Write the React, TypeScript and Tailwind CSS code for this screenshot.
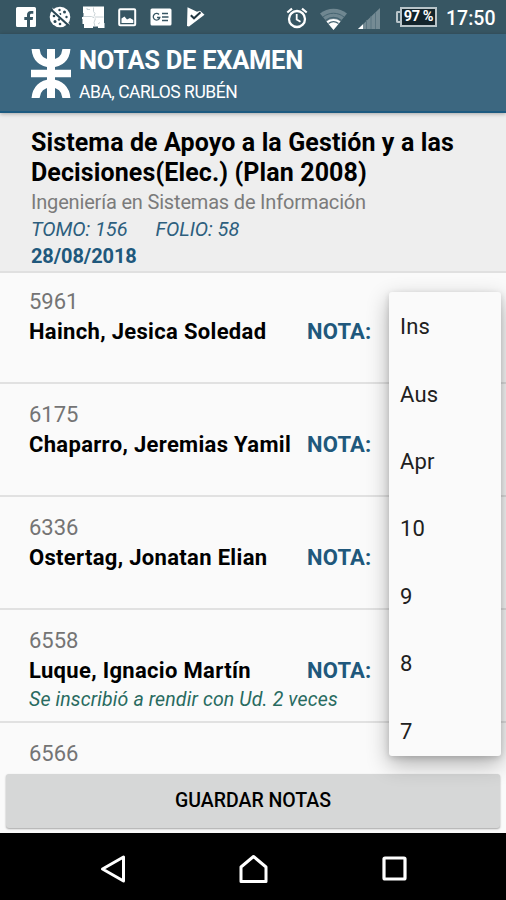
/**
 * App — Notas de examen
 *
 * - StatusBar: barra de estado del sistema
 * - AppBar: logo, título y docente
 * - ExamHeader: datos de la mesa
 * - StudentRow: alumno + nota
 * - GradeMenu: desplegable de notas
 */

interface Student {
  id: string;
  name: string;
  note?: string;
}

const STUDENTS: Student[] = [
  { id: '5961', name: 'Hainch, Jesica Soledad' },
  { id: '6175', name: 'Chaparro, Jeremias Yamil' },
  { id: '6336', name: 'Ostertag, Jonatan Elian' },
  { id: '6558', name: 'Luque, Ignacio Martín', note: 'Se inscribió a rendir con Ud. 2 veces' },
  { id: '6566', name: '' },
];

const GRADES = ['Ins', 'Aus', 'Apr', '10', '9', '8', '7'];

export default function App() {
  return (
    <div className="relative flex h-[900px] w-[506px] flex-col overflow-hidden bg-[#fafafa] font-['Roboto','Noto_Sans',sans-serif] text-black">
      <StatusBar />
      <AppBar />
      <ExamHeader />
      <main className="-mt-0.5 min-h-0 flex-1 overflow-hidden">
        {STUDENTS.map((student) => (
          <StudentRow key={student.id} student={student} />
        ))}
      </main>
      <div className="h-[60px] shrink-0 px-1.5 pt-px">
        <button
          type="button"
          className="flex h-[54px] w-full items-center justify-center rounded-[3px] bg-[#d6d7d7] text-[19.5px] font-medium shadow-[0_1px_2px_rgba(0,0,0,0.35)]"
        >
          GUARDAR NOTAS
        </button>
      </div>
      <NavBar />
      <GradeMenu />
    </div>
  );
}

function StatusBar() {
  return (
    <div className="flex h-[34px] shrink-0 items-center bg-[#375663] pl-4 text-white">
      {/* Facebook */}
      <svg width="20" height="20" viewBox="0 0 20 20">
        <path fill="currentColor" d="M1.500 0h17A1.500 1.500 0 0 1 20 1.500v17a1.500 1.500 0 0 1-1.500 1.500H14v-7h2.700l.4-3H14V8.300c0-1 .4-1.500 1.600-1.500h1.700V4c-.5-.1-1.300-.1-2.300-.1-2.500 0-4 1.500-4 4V10H8.300v3H11v7H1.500A1.500 1.500 0 0 1 0 18.500v-17A1.500 1.500 0 0 1 1.500 0z" />
      </svg>
      {/* Galleta tachada */}
      <svg className="ml-[13px]" width="22" height="22" viewBox="0 0 22 22">
        <circle cx="11" cy="11" r="10.300" fill="currentColor" />
        <g fill="#2b4855">
          <circle cx="10.500" cy="4" r="1.200" />
          <circle cx="15.500" cy="6" r="1.500" />
          <circle cx="5" cy="10" r="1.300" />
          <circle cx="17.500" cy="11" r="1.200" />
          <circle cx="11.300" cy="8" r="1" />
          <circle cx="6" cy="15.500" r="1.500" />
          <circle cx="11" cy="18" r="1.300" />
          <circle cx="10" cy="13.500" r="1.200" />
        </g>
        <path d="M2 3.500l17.500 16" stroke="#2b4855" strokeWidth="2.200" />
        <path d="M3.500 2.300l17 15.800" stroke="currentColor" strokeWidth="1" />
      </svg>
      {/* Rompecabezas */}
      <svg className="ml-[11px]" width="23" height="23" viewBox="0 0 23 23">
        <path fill="currentColor" d="M1 .5h21V17h.5v5H16v-1.500h-5V22H2v-4H.5v-5H0v-2h1.500V7H1z" />
        <path fill="none" stroke="#c3cdd1" strokeWidth=".9" d="M11.500 1.500v4l1.500 2-1 3M1.500 10.500h8l3 1.500M13.500 12.500l-1.500 4 1 4M13 11h8.500M5 2v1.500h3M16 18l2-1.500" />
      </svg>
      {/* Imagen */}
      <svg className="ml-[13px]" width="19" height="19" viewBox="0 0 19 19">
        <rect x="1.200" y="1.200" width="16" height="16" rx="1" fill="none" stroke="currentColor" strokeWidth="2" />
        <path fill="currentColor" d="M3.500 15v-4.500l3-2 2.500 3 3-1.500 3.300 2V15z" />
      </svg>
      {/* Noticias */}
      <svg className="ml-[13px]" width="22" height="18" viewBox="0 0 22 18">
        <rect x=".5" y=".5" width="21" height="17" rx="1.500" fill="currentColor" />
        <path fill="none" stroke="#375663" strokeWidth="1.300" d="M9 6.500A3.300 3.300 0 1 0 9.800 9.500H7M12 5.500h6M12 9h6.500M12 12.500h6" />
      </svg>
      {/* Play con tilde */}
      <svg className="ml-[14px]" width="19" height="20" viewBox="0 0 19 20">
        <path fill="currentColor" d="M1.500.3L11 4.800l3-1 4.500 4L3 19.500 1 19z" />
        <path d="M4.800 8.300l3.200 3 6.500-6" fill="none" stroke="#1f3540" strokeWidth="2" />
      </svg>

      {/* Alarma */}
      <svg className="ml-[81px] mt-px" width="22" height="22" viewBox="0 0 22 22" fill="none" stroke="currentColor">
        <circle cx="11" cy="12" r="8" strokeWidth="2.300" />
        <path strokeWidth="1.800" d="M10.700 7v5.500l3.800 2.300" />
        <path strokeWidth="2.200" d="M1.300 5.500L6 1.700M20.700 5.500L16 1.700" />
      </svg>
      {/* WiFi */}
      <svg className="ml-3 mt-1" width="27" height="22" viewBox="0 0 27 22">
        <path fill="#6f8791" d="M13.500 22L0 5.500C7.500-1 19.500-1 27 5.500z" />
        <path fill="none" stroke="#456471" strokeWidth="1" d="M3 9C9 4 18 4 24 9" />
        <path fill="currentColor" d="M13.500 22L6.500 13.500c4-3.300 10-3.300 14 0z" />
        <path fill="none" stroke="#456471" strokeWidth="1.300" d="M5.500 12.500c5-4 11-4 16 0M8.500 15.500c3.200-2.300 6.800-2.300 10 0" />
      </svg>
      {/* Señal */}
      <svg className="ml-[11px] mt-0.5" width="22" height="21" viewBox="0 0 22 21">
        <path fill="#758b94" d="M22 0v21H0z" />
        <path stroke="#5a7480" strokeWidth="1" d="M8.500 12v9M13 8v13M17.500 4v17" />
        <path fill="currentColor" d="M5 16.200V21H0z" />
      </svg>
      <div className="ml-4 flex h-5 w-[41px] items-center">
        <div className="h-3 w-1 shrink-0 rounded-l-[2px] border-2 border-r-0 border-[#b8c4c9]" />
        <div className="flex h-5 w-[37px] shrink-0 items-center justify-center whitespace-nowrap border-2 border-[#b8c4c9] bg-[#13242c] text-[14.5px] font-bold leading-none tracking-[-0.4px]">
          97 %
        </div>
      </div>
      <span className="ml-[9px] mt-[3px] whitespace-nowrap text-[19.5px] font-medium leading-none">17:50</span>
    </div>
  );
}

function AppBar() {
  return (
    <header className="z-10 flex h-[79px] shrink-0 border-b-2 border-[#1d5a80] bg-[#3c6780] pl-[31px] text-white shadow-[0_1px_4px_rgba(0,0,0,0.3)]">
      <svg className="mt-[15px]" width="40" height="49" viewBox="0 0 40 49">
        <path fill="currentColor" d="M16 0h8v49h-8zM0 20.800h40v7.400H0z" />
        <path fill="none" stroke="currentColor" strokeWidth="8" d="M4.500 -1C5 9 11 14.500 20 14.500S35 9 35.500 -1M4.500 50C5 40 11 34.500 20 34.500S35 40 35.500 50" />
      </svg>
      <div className="ml-2 flex flex-col whitespace-nowrap">
        <h1 className="mt-[11px] text-[25.5px] font-bold leading-[30px] tracking-[-0.27px]">NOTAS DE EXAMEN</h1>
        <p className="mt-[5px] text-[17.5px] leading-6 tracking-[-0.47px]">ABA, CARLOS RUBÉN</p>
      </div>
    </header>
  );
}

function ExamHeader() {
  return (
    <section className="h-[160px] shrink-0 whitespace-nowrap border-b-2 border-[#e0e0e0] bg-[#eeeeee] pl-[31px] pt-[15px]">
      <h2 className="text-[25px] font-bold leading-[29.5px] tracking-[0.11px]">
        Sistema de Apoyo a la Gestión y a las
        <br />
        Decisiones(Elec.) (Plan 2008)
      </h2>
      <p className="mt-0.5 text-[20px] leading-[27px] tracking-[-0.18px] text-[#7b7b7b]">Ingeniería en Sistemas de Información</p>
      <p className="flex gap-7 text-[20px] italic leading-[27px] tracking-[-0.1px] text-[#2d5f7e]">
        <span>TOMO: 156</span>
        <span>FOLIO: 58</span>
      </p>
      <p className="text-[20px] font-bold leading-[27px] tracking-[-0.1px] text-[#20587c]">28/08/2018</p>
    </section>
  );
}

function StudentRow({ student }: { student: Student }) {
  return (
    <div className="h-[113px] whitespace-nowrap border-b-2 border-[#e1e1e1] pl-[29px] pt-4">
      <p className="text-[22px] leading-[30px] text-[#747474]">{student.id}</p>
      {student.name && (
        <div className="flex text-[22px] font-bold leading-[30px]">
          <span className="w-[278px] tracking-[0.32px]">{student.name}</span>
          <span className="tracking-[0.2px] text-[#20587c]">NOTA:</span>
        </div>
      )}
      {student.note && (
        <p className="text-[19.5px] italic leading-[28px] tracking-[0.14px] text-[#286a60]">{student.note}</p>
      )}
    </div>
  );
}

// Desplegable abierto sobre la lista
function GradeMenu() {
  return (
    <ul className="absolute left-[389px] top-[292px] z-20 h-[464px] w-[112px] overflow-hidden rounded-[3px] bg-[#fafafa] pt-px text-[22px] tracking-[0.15px] text-[#202020] shadow-[0_8px_22px_rgba(0,0,0,0.3),0_2px_6px_rgba(0,0,0,0.15)]">
      {GRADES.map((grade) => (
        <li key={grade} className="flex h-[67.4px] items-center pl-[11px]">
          {grade}
        </li>
      ))}
    </ul>
  );
}

function NavBar() {
  return (
    <nav className="flex h-[67px] shrink-0 items-center bg-black pt-1 text-white">
      <svg className="ml-[99px]" width="27" height="30" viewBox="0 0 27 30">
        <path d="M24.500 3v24L3.500 15z" fill="none" stroke="currentColor" strokeWidth="3" strokeLinejoin="round" />
      </svg>
      <svg className="ml-[113px]" width="29" height="30" viewBox="0 0 29 30">
        <path d="M2 27.500V13L14.500 2.500 27 13v14.500z" fill="none" stroke="currentColor" strokeWidth="3" strokeLinejoin="round" />
      </svg>
      <svg className="ml-[114px]" width="25" height="25" viewBox="0 0 25 25">
        <rect x="2" y="2" width="21" height="21" rx="1" fill="none" stroke="currentColor" strokeWidth="3.200" />
      </svg>
    </nav>
  );
}
